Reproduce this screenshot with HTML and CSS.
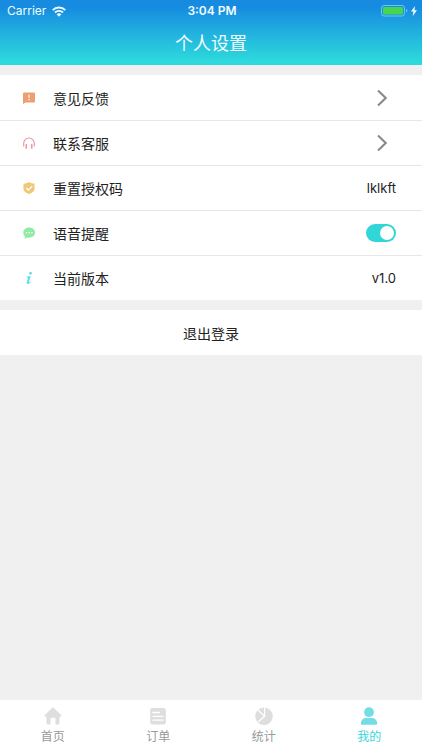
FILE: index.html
```html
<!DOCTYPE html>
<html lang="zh-CN">
<head>
<meta charset="utf-8">
<meta name="viewport" content="width=device-width, initial-scale=1">
<title>个人设置</title>
<link rel="stylesheet" href="styles.css">
</head>
<body>
<header class="header">
  <div class="status">
    <div class="status-side">
      <span>Carrier</span>
      <svg class="wifi" viewBox="0 0 14 11" aria-hidden="true">
        <path d="M.7 4.2A8.8 8.8 0 0 1 13.300 4.200M3 6.500a5.700 5.700 0 0 1 8 0" fill="none" stroke="currentColor" stroke-width="1.900"/>
        <path d="M7 10.800 4.600 8.300a3.500 3.500 0 0 1 4.800 0z" fill="currentColor"/>
      </svg>
    </div>
    <span class="clock">3:04 PM</span>
    <div class="status-side status-end">
      <svg class="battery" viewBox="0 0 27 12" aria-hidden="true">
        <rect x=".5" y=".5" width="23" height="10.5" rx="2.5" fill="none" stroke="#6fc4f0"/>
        <rect x="2" y="2" width="20" height="7.5" rx="1" fill="#46d550"/>
        <path d="M25 4v3.600q1.400-.5 1.400-1.800T25 4z" fill="#6fc4f0"/>
      </svg>
      <svg class="bolt" viewBox="0 0 6 10" aria-hidden="true"><path d="M4 0 0 5.600h2.300L1.700 10 6 4.200H3.500z" fill="currentColor"/></svg>
    </div>
  </div>
  <h1 class="title">个人设置</h1>
</header>

<main class="content">
  <section class="list">
    <a class="row" href="#feedback">
      <svg class="icon" viewBox="0 0 12 12" aria-hidden="true">
        <path d="M1 .5h10a1 1 0 0 1 1 1v8a1 1 0 0 1-1 1H2.500L0 12V1.500a1 1 0 0 1 1-1z" fill="#eda06f"/>
        <path d="M6 2.700v3M6 7v1.300" stroke="#fff" stroke-width="1.200"/>
      </svg>
      <span class="label">意见反馈</span>
      <svg class="arrow" viewBox="0 0 10 18" aria-hidden="true"><path d="M1 1.500 8.700 9 1 16.500"/></svg>
    </a>
    <a class="row" href="#service">
      <svg class="icon" viewBox="0 0 12 12" aria-hidden="true">
        <path d="M.7 9.500V6.300a5.300 5.300 0 0 1 10.600 0v3.200" fill="none" stroke="#ed8f99" stroke-width="1.100"/>
        <path d="M3.200 7.500v3.700M8.800 7.500v3.700" stroke="#ed8f99" stroke-width="1.400" stroke-linecap="round"/>
      </svg>
      <span class="label">联系客服</span>
      <svg class="arrow" viewBox="0 0 10 18" aria-hidden="true"><path d="M1 1.500 8.700 9 1 16.500"/></svg>
    </a>
    <div class="row">
      <svg class="icon" viewBox="0 0 12 12" aria-hidden="true">
        <path d="M6 0Q8.500 1.700 11.500 1.700V7Q11.500 10 6 12 .5 10 .5 7V1.700Q3.500 1.700 6 0z" fill="#efc878"/>
        <path d="m3.200 6 2.100 2.100 3.800-3.900" fill="none" stroke="#fff" stroke-width="1.300"/>
      </svg>
      <span class="label">重置授权码</span>
      <span class="value">lklkft</span>
    </div>
    <div class="row">
      <svg class="icon" viewBox="0 0 12 12" aria-hidden="true">
        <path d="M6.200.5C9.500.5 12 2.700 12 5.600s-2.500 5.200-5.800 5.200q-1.200 0-2.200-.4L1.700 12l.1-2.700Q.3 7.800.3 5.700C.3 2.700 2.900.5 6.200.5z" fill="#91eba5"/>
        <g fill="#fff"><circle cx="3.500" cy="5.800" r=".8"/><circle cx="6.200" cy="5.800" r=".8"/><circle cx="8.900" cy="5.800" r=".8"/></g>
      </svg>
      <label class="label" for="voice">语音提醒</label>
      <input class="switch" id="voice" type="checkbox" role="switch" checked>
    </div>
    <div class="row">
      <svg class="icon" viewBox="0 0 12 12" aria-hidden="true">
        <circle cx="7.500" cy="1.300" r="1.400" fill="#67dde2"/>
        <path d="M3.500 4.600 7.700 4 6 10.300q0 .7 1.900-.7l.3.500Q6.500 12 4.900 12 3.300 12 3.700 10.400L5 5.500l-1.600-.2z" fill="#67dde2"/>
      </svg>
      <span class="label">当前版本</span>
      <span class="value">v1.0</span>
    </div>
  </section>
  <button class="logout" type="button">退出登录</button>
</main>

<nav class="tabs">
  <a class="tab" href="#home">
    <svg class="tab-icon" viewBox="0 0 18 18" aria-hidden="true"><path d="M8.300.7q.7-.6 1.400 0l7.600 7.500q1 1.100-.4 1.300H15.500V16q0 1.500-1.500 1.500h-2.500V12q0-1.200-1.200-1.200H7.700Q6.500 10.800 6.500 12v5.500H4Q2.500 17.500 2.500 16V9.500H1.100Q-.3 9.300.7 8.200z" fill="currentColor"/></svg>
    <span class="tab-text">首页</span>
  </a>
  <a class="tab" href="#orders">
    <svg class="tab-icon" viewBox="0 0 18 18" aria-hidden="true"><rect x="1.200" y="1" width="15.600" height="16.500" rx="2" fill="currentColor"/><path d="M4 5.500h6.500M4 9.300h10M4 13.200h10" stroke="#fff" stroke-width="1.300" stroke-linecap="round"/></svg>
    <span class="tab-text">订单</span>
  </a>
  <a class="tab" href="#stats">
    <svg class="tab-icon" viewBox="0 0 18 18" aria-hidden="true"><circle cx="9" cy="9.200" r="8.800" fill="currentColor"/><path d="M9.600 0v9.200L3 15M9.600 9.200 2.700 2.800" fill="none" stroke="#fff" stroke-width="1.200"/></svg>
    <span class="tab-text">统计</span>
  </a>
  <a class="tab tab-active" href="#mine" aria-current="page">
    <svg class="tab-icon" viewBox="0 0 18 18" aria-hidden="true"><circle cx="9" cy="5.200" r="4.900" fill="currentColor"/><path d="M.8 16.500C1.200 12.500 3.500 11 6 11h6c2.500 0 4.800 1.500 5.200 5.500q0 1.300-1.200 1.300H2Q.8 17.800.8 16.500z" fill="currentColor"/></svg>
    <span class="tab-text">我的</span>
  </a>
</nav>
</body>
</html>
```
FILE: styles.css
```css
* {
  box-sizing: border-box;
}

body {
  display: flex;
  flex-direction: column;
  min-height: 100vh;
  margin: 0;
  background: #f0f0f0;
  color: #222;
  font-family: Inter, "Noto Sans CJK SC", sans-serif;
  font-size: 13px;
}

a {
  color: inherit;
  text-decoration: none;
}

.header {
  padding-bottom: 6px;
  background: linear-gradient(#168be0 10%, #2dd9dc 94%);
  color: #f2fcff;
}

.status {
  display: flex;
  align-items: center;
  padding: 2px 5px 0 7px;
  font-size: 12px;
  line-height: 18px;
}

.status-side {
  display: flex;
  flex: 1;
  align-items: center;
  gap: 6px;
}

.status-end {
  justify-content: flex-end;
  gap: 3px;
}

.clock {
  font-weight: 600;
}

.wifi {
  width: 14px;
  height: 11px;
}

.battery {
  width: 27px;
  height: 12px;
}

.bolt {
  width: 6px;
  height: 10px;
}

.title {
  margin: 9px 0 0;
  font-size: 18px;
  font-weight: 400;
  line-height: 30px;
  text-align: center;
}

.content {
  display: flex;
  flex: 1;
  flex-direction: column;
  gap: 10px;
  padding-top: 10px;
}

.list {
  background: #fff;
}

.row {
  display: flex;
  align-items: center;
  height: 45px;
  padding: 0 26px 0 23px;
}

.row + .row {
  border-top: 1px solid #e6e6e6;
}

.icon {
  width: 12px;
  height: 12px;
  margin-right: 18px;
}

.label {
  flex: 1;
  font-size: 14px;
}

.arrow {
  width: 10px;
  height: 18px;
  margin-right: 9px;
  fill: none;
  stroke: #888;
  stroke-width: 2;
}

.switch {
  display: flex;
  align-items: center;
  justify-content: flex-end;
  width: 30px;
  height: 18px;
  margin: 0;
  padding: 2px;
  border-radius: 9px;
  background: #ccc;
  appearance: none;
}

.switch::before {
  width: 14px;
  height: 14px;
  border-radius: 50%;
  background: #fff;
  content: "";
}

.switch:checked {
  background: #30d6d8;
}

.switch:not(:checked) {
  justify-content: flex-start;
}

.logout {
  height: 45px;
  padding: 0;
  border: 0;
  background: #fff;
  color: inherit;
  font-family: inherit;
  font-size: 14px;
}

.tabs {
  display: grid;
  grid-template-columns: repeat(4, 1fr);
  height: 50px;
  background: #fff;
  color: #999;
}

.tab {
  display: flex;
  flex-direction: column;
  align-items: center;
  padding-top: 7px;
  font-size: 12px;
  line-height: 18px;
}

.tab-icon {
  width: 18px;
  height: 18px;
  margin-bottom: 3px;
  color: #dedede;
}

.tab-active {
  color: #35d6dc;
}

.tab-active .tab-icon {
  color: #72dde3;
}
```
